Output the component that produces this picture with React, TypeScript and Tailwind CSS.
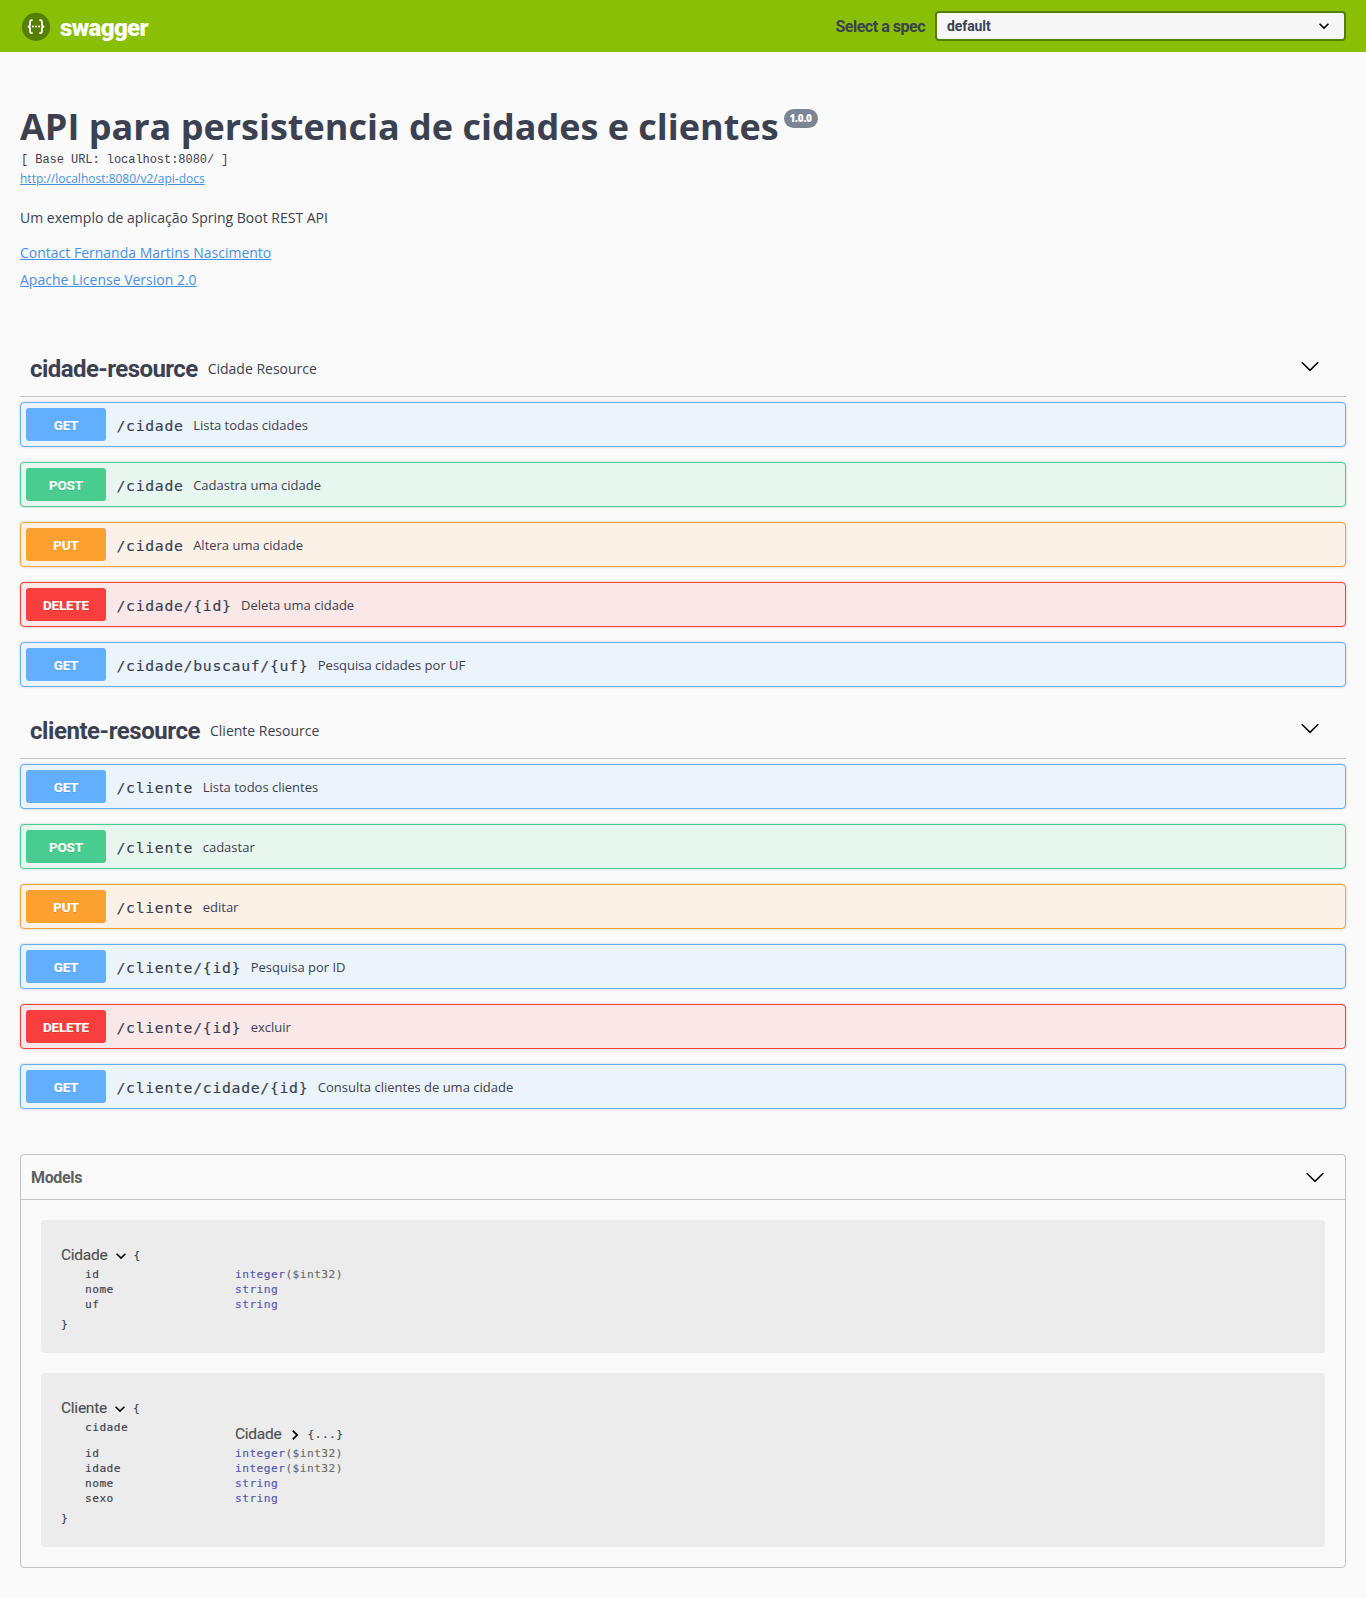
import React from 'react';

type Method = 'GET' | 'POST' | 'PUT' | 'DELETE';
type Operation = { method: Method; path: string; summary: string };

const rowTone: Record<Method, string> = {
  GET: 'border-[#61affe] bg-[#ebf3fb]',
  POST: 'border-[#49cc90] bg-[#e8f6f0]',
  PUT: 'border-[#fca130] bg-[#fbf1e6]',
  DELETE: 'border-[#f93e3e] bg-[#fae7e7]',
};

const badgeTone: Record<Method, string> = {
  GET: 'bg-[#61affe]',
  POST: 'bg-[#49cc90]',
  PUT: 'bg-[#fca130]',
  DELETE: 'bg-[#f93e3e]',
};

const cidadeOps: Operation[] = [
  { method: 'GET', path: '/cidade', summary: 'Lista todas cidades' },
  { method: 'POST', path: '/cidade', summary: 'Cadastra uma cidade' },
  { method: 'PUT', path: '/cidade', summary: 'Altera uma cidade' },
  { method: 'DELETE', path: '/cidade/{id}', summary: 'Deleta uma cidade' },
  { method: 'GET', path: '/cidade/buscauf/{uf}', summary: 'Pesquisa cidades por UF' },
];

const clienteOps: Operation[] = [
  { method: 'GET', path: '/cliente', summary: 'Lista todos clientes' },
  { method: 'POST', path: '/cliente', summary: 'cadastar' },
  { method: 'PUT', path: '/cliente', summary: 'editar' },
  { method: 'GET', path: '/cliente/{id}', summary: 'Pesquisa por ID' },
  { method: 'DELETE', path: '/cliente/{id}', summary: 'excluir' },
  { method: 'GET', path: '/cliente/cidade/{id}', summary: 'Consulta clientes de uma cidade' },
];

function LargeArrow() {
  return (
    <svg width="20" height="20" viewBox="0 0 20 20" className="shrink-0">
      <path d="M17.418 6.109c.272-.268.709-.268.979 0s.271.701 0 .969l-7.908 7.83c-.27.268-.707.268-.979 0l-7.908-7.83c-.27-.268-.27-.701 0-.969.271-.268.709-.268.979 0L10 13.25l7.418-7.141z" />
    </svg>
  );
}

function SmallArrow({ className }: { className: string }) {
  return (
    <svg width="20" height="20" viewBox="0 0 24 24" className={className}>
      <path d="M10 6L8.59 7.41 13.17 12l-4.58 4.59L10 18l6-6z" />
    </svg>
  );
}

function OperationRow({ method, path, summary }: Operation) {
  return (
    <div className={`flex h-[45px] items-center rounded border p-[5px] shadow-[0_0_3px_rgba(0,0,0,0.19)] ${rowTone[method]}`}>
      <span
        className={`h-[33px] w-20 rounded-[3px] text-center font-['Roboto'] text-[13.5px] leading-[34px] font-extrabold tracking-[-0.25px] text-white [text-shadow:0_1px_0_rgba(0,0,0,0.1)] ${badgeTone[method]}`}
      >
        {method}
      </span>
      <span className="pt-[2px] pr-[9.5px] pl-[10.5px] font-['DejaVu_Sans_Mono'] text-[14.8px] leading-5 tracking-[0.68px] [-webkit-text-stroke:0.15px]">{path}</span>
      <span className="text-[13px] leading-5">{summary}</span>
    </div>
  );
}

function Section({ name, description, operations, titleClass }: { name: string; description: string; operations: Operation[]; titleClass: string }) {
  return (
    <section>
      <div className="flex h-[55px] items-center border-b border-[#3b4151]/30 pr-[26px] pl-2.5">
        <h3 className={`font-['Roboto'] text-2xl leading-[30px] font-bold whitespace-nowrap ${titleClass}`}>{name}</h3>
        <span className="flex-1 pl-2.5 text-sm">{description}</span>
        <span className="mb-[7px]">
          <LargeArrow />
        </span>
      </div>
      <div className="mt-[5px] flex flex-col gap-[15px]">
        {operations.map((op) => (
          <OperationRow key={op.method + op.path} {...op} />
        ))}
      </div>
    </section>
  );
}

function ModelTitle({ name, open }: { name: string; open: boolean }) {
  return (
    <div className="flex h-5 items-center">
      <span className="font-['Roboto'] text-[15.5px] leading-5 tracking-[-0.25px] text-[#505050]">{name}</span>
      <SmallArrow className={open ? 'mt-0.5 ml-[3px] rotate-90' : 'mt-0.5 ml-[3px]'} />
      <span className="mt-px ml-[3px]">{open ? '{' : '{...}'}</span>
    </div>
  );
}

function Field({ name, type, format }: { name: string; type: string; format?: string }) {
  return (
    <div className="flex h-[15px] pl-6 leading-[15px]">
      <span className="w-[150px]">{name}</span>
      <span className="text-[#5555aa]">{type}</span>
      {format && <span className="text-[#6b6b6b]">{format}</span>}
    </div>
  );
}

export default function App() {
  return (
    <div className="h-[1598px] bg-[#fafafa] font-['Open_Sans',sans-serif] text-[#3b4151]">
      <header className="flex h-[52px] items-center bg-[#89bf04] px-5">
        <svg width="30" height="30" viewBox="0 0 30 30" className="ml-px">
          <circle cx="15" cy="15.9" r="14.1" fill="#547f00" />
          <path
            d="M11.6 9.2H10.8C9.5 9.2 9.1 9.9 9.1 11V13.4C9.1 14.9 8.4 15.6 6.7 15.6C8.4 15.6 9.1 16.3 9.1 17.8V20.2C9.1 21.3 9.5 22 10.8 22H11.6M18.4 9.2H19.2C20.5 9.2 20.9 9.9 20.9 11V13.4C20.9 14.9 21.6 15.6 23.3 15.6C21.6 15.6 20.9 16.3 20.9 17.8V20.2C20.9 21.3 20.5 22 19.2 22H18.4"
            fill="none"
            stroke="#fff"
            strokeWidth="1.8"
          />
          <circle cx="11.9" cy="15.6" r="1" fill="#fff" />
          <circle cx="15" cy="15.6" r="1" fill="#fff" />
          <circle cx="18.1" cy="15.6" r="1" fill="#fff" />
        </svg>
        <span className="ml-[9px] pt-[3px] font-['Roboto'] text-2xl leading-8 font-black tracking-[-0.6px] text-white">swagger</span>
        <span className="ml-auto pt-0.5 font-['Roboto'] text-base leading-6 font-bold tracking-[-0.48px]">Select a spec</span>
        <div className="ml-2.5 flex h-[30px] w-[411px] items-center justify-between rounded border-2 border-[#547f00] bg-[#f7f7f7] pr-2.5 pl-2.5">
          <span className="font-['Roboto'] text-sm leading-5 font-bold tracking-[-0.1px]">default</span>
          <SmallArrow className="rotate-90" />
        </div>
      </header>

      <main className="px-5">
        <div className="flex h-[98px] items-end">
          <h2 className="text-[36px] leading-[46px] font-bold whitespace-nowrap">API para persistencia de cidades e clientes</h2>
          <span className="mb-[22px] ml-[5px] h-[19px] w-[34px] rounded-full bg-[#7d8492] text-center text-[10px] leading-[19px] font-extrabold tracking-[-0.2px] text-white">1.0.0</span>
        </div>
        <pre className="h-[18px] pl-px font-['Liberation_Mono'] text-[12px] leading-5 tracking-[-0.05px]">[ Base URL: localhost:8080/ ]</pre>
        <div className="h-[22px] text-[12px] leading-[22px]">
          <a className="text-[#4990e2] underline">http://localhost:8080/v2/api-docs</a>
        </div>
        <p className="mt-[18px] text-sm leading-5">Um exemplo de aplicação Spring Boot REST API</p>
        <p className="mt-[15px] text-sm leading-5">
          <a className="text-[#4990e2] underline">Contact Fernanda Martins Nascimento</a>
        </p>
        <p className="mt-[7px] text-sm leading-5">
          <a className="text-[#4990e2] underline">Apache License Version 2.0</a>
        </p>

        <div className="mt-[52px] flex flex-col gap-[17px]">
          <Section name="cidade-resource" description="Cidade Resource" operations={cidadeOps} titleClass="tracking-[-0.56px]" />
          <Section name="cliente-resource" description="Cliente Resource" operations={clienteOps} titleClass="tracking-[-0.44px]" />
        </div>

        <section className="mt-[45px] h-[414px] rounded border border-[#3b4151]/30">
          <div className="flex h-[45px] items-center justify-between border-b border-[#3b4151]/30 pr-5 pl-2.5">
            <h4 className="pt-0.5 font-['Roboto'] text-base font-bold tracking-[-0.35px] text-[#606060]">Models</h4>
            <LargeArrow />
          </div>
          <div className="flex flex-col gap-5 p-5 font-['DejaVu_Sans_Mono'] text-[11.2px] leading-[15px] tracking-[0.46px] [-webkit-text-stroke:0.15px]">
            <div className="h-[133px] rounded bg-[#ececec] px-5 pt-[25px]">
              <ModelTitle name="Cidade" open />
              <div className="pt-0.5 pb-[5px]">
                <Field name="id" type="integer" format="($int32)" />
                <Field name="nome" type="string" />
                <Field name="uf" type="string" />
              </div>
              <span>{'}'}</span>
            </div>
            <div className="h-[174px] rounded bg-[#ececec] px-5 pt-[25px]">
              <ModelTitle name="Cliente" open />
              <div className="pt-0.5 pb-[5px]">
                <div className="flex h-[26px] pl-6">
                  <span className="w-[150px]">cidade</span>
                  <div className="pt-[4px]">
                    <ModelTitle name="Cidade" open={false} />
                  </div>
                </div>
                <Field name="id" type="integer" format="($int32)" />
                <Field name="idade" type="integer" format="($int32)" />
                <Field name="nome" type="string" />
                <Field name="sexo" type="string" />
              </div>
              <span>{'}'}</span>
            </div>
          </div>
        </section>
      </main>
    </div>
  );
}
